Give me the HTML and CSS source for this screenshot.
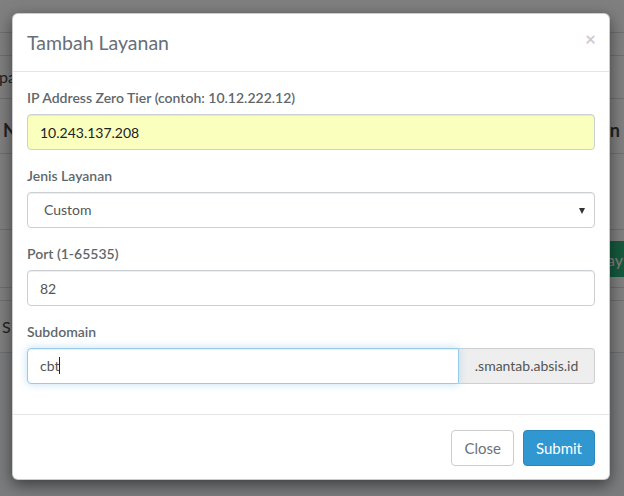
FILE: index.html
```html
<!DOCTYPE html>
<html lang="id">
<head>
<meta charset="utf-8">
<title>Tambah Layanan</title>
<link rel="stylesheet" href="styles.css">
</head>
<body>
<div class="page">
  <div class="row r1"></div>
  <div class="row r2"></div>
  <div class="row r3"><span class="cell-l">pa</span></div>
  <div class="row r4"><span class="cell-l strong">N</span><span class="cell-r strong">Layanan</span></div>
  <div class="row r5"></div>
  <div class="row r6"><span></span><span class="btn-green">Bay</span></div>
  <div class="row r7"></div>
  <div class="row r8"><span class="cell-l s">S</span></div>
</div>
<div class="backdrop"></div>
<div class="modal-wrap">
  <div class="modal">
    <div class="modal-header">
      <h4 class="modal-title">Tambah Layanan</h4>
      <span class="close">&times;</span>
    </div>
    <div class="modal-body">
      <div class="form-group">
        <label class="label">IP Address Zero Tier (contoh: 10.12.222.12)</label>
        <input class="form-control autofill" type="text" value="10.243.137.208">
      </div>
      <div class="form-group">
        <label class="label">Jenis Layanan</label>
        <div class="select-wrap">
          <select class="form-control select"><option>Custom</option></select>
          <span class="caret"></span>
        </div>
      </div>
      <div class="form-group">
        <label class="label">Port (1-65535)</label>
        <input class="form-control" type="text" value="82">
      </div>
      <div class="form-group">
        <label class="label">Subdomain</label>
        <div class="input-group">
          <div class="form-control focus">cbt<span class="cursor"></span></div>
          <span class="addon">.smantab.absis.id</span>
        </div>
      </div>
    </div>
    <div class="modal-footer">
      <button class="btn btn-default" type="button">Close</button>
      <button class="btn btn-primary" type="button">Submit</button>
    </div>
  </div>
</div>
</body>
</html>
```

FILE: styles.css
```css
* { box-sizing: border-box; }
html, body { margin: 0; padding: 0; }
body {
  width: 624px;
  height: 496px;
  overflow: hidden;
  background: #f5f8fa;
  font-family: Lato, "Open Sans", sans-serif;
  font-size: 14px;
  line-height: 1.6;
  color: #636b6f;
  position: relative;
}
.page { background: #fff; }
.row {
  display: flex;
  justify-content: space-between;
  align-items: center;
  border-bottom: 1px solid #ddd;
  color: #444;
  font-size: 16px;
}
.r1 { height: 33px; }
.r2 { height: 23px; }
.r3 { height: 43px; }
.r4 { height: 55px; align-items: flex-end; padding-bottom: 8px; }
.r5 { height: 76px; }
.r6 { height: 58px; }
.r7 { height: 13px; }
.r8 { height: 52px; }
.cell-l { margin-left: -1px; }
.cell-l.strong { margin-left: 3px; }
.cell-l.s { margin-left: 2px; }
.cell-r { margin-right: 4px; }
.strong { font-weight: 700; font-size: 18px; }
.btn-green {
  background: #2ab27b;
  color: #fff;
  padding: 6px 1px 6px 12px;
  height: 36px;
}
.backdrop {
  position: absolute;
  inset: 0;
  background: rgba(0, 0, 0, 0.5);
}
.modal-wrap {
  position: absolute;
  inset: 0;
  padding: 13px 14px 0 12px;
}
.modal {
  width: 598px;
  background: #fff;
  border: 1px solid rgba(0, 0, 0, 0.2);
  border-radius: 6px;
  box-shadow: 0 5px 15px rgba(0, 0, 0, 0.5);
}
.modal-header {
  display: flex;
  justify-content: space-between;
  align-items: center;
  padding: 15px 15px 14px 14px;
  border-bottom: 1px solid #e5e5e5;
}
.modal-title {
  margin: 0;
  font-size: 19.5px;
  font-weight: 400;
  line-height: 28px;
  color: #66707a;
}
.close {
  font-size: 19px;
  font-weight: 700;
  line-height: 1;
  color: #000;
  opacity: 0.2;
  margin-top: -10px;
  margin-right: -2px;
}
.modal-body { padding: 15px 14px 15px 14px; }
.form-group { margin-bottom: 15px; display: flex; flex-direction: column; }
.label {
  display: block;
  font-weight: 600;
  line-height: 22px;
  margin-bottom: 5px;
  color: #5f676b;
}
.form-control {
  display: block;
  width: 100%;
  height: 36px;
  padding: 6px 12px;
  font-family: inherit;
  font-size: 14px;
  line-height: 22px;
  color: #555;
  background: #fff;
  border: 1px solid #ccd0d2;
  border-radius: 4px;
  box-shadow: inset 0 1px 1px rgba(0, 0, 0, 0.075);
}
.autofill { background: #faffbd; color: #222; }
.select-wrap { position: relative; }
.select {
  appearance: none;
  -webkit-appearance: none;
  padding-left: 16px;
}
.caret {
  position: absolute;
  right: 10px;
  top: 16px;
  width: 0;
  height: 0;
  border-left: 3.5px solid transparent;
  border-right: 3.5px solid transparent;
  border-top: 6px solid #333;
}
.input-group { display: flex; }
.input-group .form-control.focus {
  flex: 1;
  border-color: #98cbe8;
  border-radius: 4px 0 0 4px;
  box-shadow: inset 0 1px 1px rgba(0, 0, 0, 0.075), 0 0 8px rgba(152, 203, 232, 0.6);
  position: relative;
  z-index: 1;
}
.cursor {
  display: inline-block;
  width: 1px;
  height: 17px;
  background: #222;
  vertical-align: -3px;
}
.addon {
  width: 136px;
  flex: none;
  height: 36px;
  padding: 6px 12px;
  line-height: 22px;
  text-align: center;
  color: #555;
  background: #eee;
  border: 1px solid #ccd0d2;
  border-left: 0;
  border-radius: 0 4px 4px 0;
}
.modal-footer {
  display: flex;
  justify-content: flex-end;
  gap: 9px;
  padding: 15px 14px 13px;
  border-top: 1px solid #e5e5e5;
}
.btn {
  height: 36px;
  padding: 6px 12px;
  font-family: inherit;
  font-size: 15px;
  line-height: 22px;
  border-radius: 4px;
  border: 1px solid transparent;
}
.btn-default { background: #fff; border-color: #ccc; color: #6b7378; }
.btn-primary { background: #3097d1; border-color: #2a88bd; color: #fff; }
```
